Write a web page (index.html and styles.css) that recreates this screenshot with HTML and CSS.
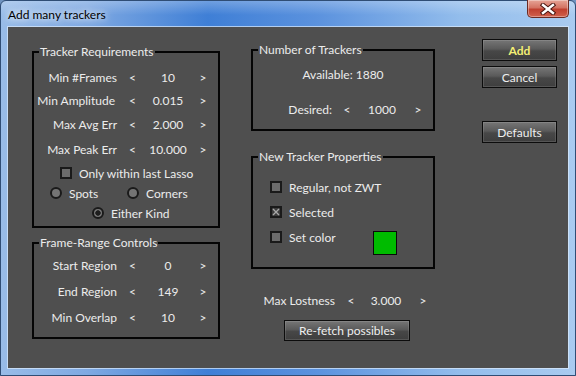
FILE: index.html
```html
<!DOCTYPE html>
<html lang="en">
<head>
  <meta charset="UTF-8" />
  <title>Add many trackers</title>
  <link rel="stylesheet" href="styles.css">
</head>
<body>
  <div class="window">
    <div class="titlebar">
      <span class="title">Add many trackers</span>
      <span class="close">
        <svg width="16" height="12" viewBox="0 0 16 12">
          <path d="M3 2 L13 10 M13 2 L3 10" stroke="#4a1510" stroke-width="4.4" stroke-linecap="square"/>
          <path d="M3 2 L13 10 M13 2 L3 10" stroke="#fff" stroke-width="2.4" stroke-linecap="square"/>
        </svg>
      </span>
    </div>

    <div class="client">
      <div class="col col-left">
        <fieldset class="group req">
          <legend>Tracker Requirements</legend>
          <div class="spin-grid req-grid">
            <span class="lbl">Min #Frames</span><span class="arr">&lt;</span><span class="val">10</span><span class="arr">&gt;</span>
            <span class="lbl amp">Min Amplitude</span><span class="arr">&lt;</span><span class="val">0.015</span><span class="arr">&gt;</span>
            <span class="lbl">Max Avg Err</span><span class="arr">&lt;</span><span class="val">2.000</span><span class="arr">&gt;</span>
            <span class="lbl">Max Peak Err</span><span class="arr">&lt;</span><span class="val">10.000</span><span class="arr">&gt;</span>
          </div>
          <div class="check lasso"><span class="box"></span>Only within last Lasso</div>
          <div class="radio-row">
            <span class="radio spots"><span class="dot"></span>Spots</span>
            <span class="radio"><span class="dot"></span>Corners</span>
          </div>
          <div class="radio-row either">
            <span class="radio"><span class="dot on"></span>Either Kind</span>
          </div>
        </fieldset>

        <fieldset class="group range">
          <legend>Frame-Range Controls</legend>
          <div class="spin-grid range-grid">
            <span class="lbl">Start Region</span><span class="arr">&lt;</span><span class="val">0</span><span class="arr">&gt;</span>
            <span class="lbl">End Region</span><span class="arr">&lt;</span><span class="val">149</span><span class="arr">&gt;</span>
            <span class="lbl">Min Overlap</span><span class="arr">&lt;</span><span class="val">10</span><span class="arr">&gt;</span>
          </div>
        </fieldset>
      </div>

      <div class="col col-mid">
        <fieldset class="group count">
          <legend>Number of Trackers</legend>
          <div class="available">Available: 1880</div>
          <div class="spin-grid desired-grid">
            <span class="lbl">Desired:</span><span class="arr">&lt;</span><span class="val">1000</span><span class="arr">&gt;</span>
          </div>
        </fieldset>

        <fieldset class="group props">
          <legend>New Tracker Properties</legend>
          <div class="prop-list">
            <div class="check prop"><span class="box"></span>Regular, not ZWT</div>
            <div class="check prop">
              <span class="box on">
                <svg width="8" height="8" viewBox="0 0 8 8"><path d="M1 1 L7 7 M7 1 L1 7" stroke="#a8a8a8" stroke-width="1.4"/></svg>
              </span>Selected
            </div>
            <div class="color-row">
              <div class="check prop setcolor"><span class="box"></span>Set color</div>
              <span class="swatch"></span>
            </div>
          </div>
        </fieldset>

        <div class="spin-grid lost-grid">
          <span class="lbl">Max Lostness</span><span class="arr">&lt;</span><span class="val">3.000</span><span class="arr">&gt;</span>
        </div>
        <button class="btn refetch">Re-fetch possibles</button>
      </div>

      <div class="col col-right">
        <button class="btn add">Add</button>
        <button class="btn">Cancel</button>
        <button class="btn defaults">Defaults</button>
      </div>
    </div>
  </div>
</body>
</html>
```

FILE: styles.css
```css
* { margin: 0; padding: 0; box-sizing: border-box; }

body {
  width: 576px;
  height: 376px;
  overflow: hidden;
  font-family: Lato, "Noto Sans", sans-serif;
  font-size: 12px;
  background: #6f93c0;
}

.window {
  width: 576px;
  height: 376px;
  display: flex;
  flex-direction: column;
  border: 1px solid #2f4d75;
  border-radius: 6px 6px 0 0;
  background:
    linear-gradient(rgba(255,255,255,0.25), rgba(255,255,255,0) 14px),
    linear-gradient(90deg, #98bce8 0%, #7fa9e2 15%, #3f7fd6 36%, #5b92de 55%, #93bdec 80%, #a9cbf0 100%);
}

.titlebar {
  height: 26px;
  display: flex;
  align-items: flex-start;
}

.title {
  padding: 6px 0 0 7px;
  line-height: 15px;
  color: #000;
  text-shadow: 0 0 6px #fff, 0 0 10px rgba(255,255,255,0.8);
}

.close {
  margin: -1px 6px 0 auto;
  width: 42px;
  height: 18px;
  display: flex;
  justify-content: center;
  align-items: center;
  border: 1px solid #6b2a22;
  border-top: none;
  border-radius: 0 0 5px 5px;
  background: linear-gradient(#e6a496, #d47363 45%, #c0402f 55%, #d0604c);
  box-shadow: inset 0 0 0 1px rgba(255,255,255,0.35);
}

.client {
  width: 560px;
  height: 341px;
  margin-left: 7px;
  display: flex;
  align-items: flex-start;
  padding: 12px 0 0 24px;
  background: #4f4f4f;
  color: #ececec;
  box-shadow: 0 0 0 1px rgba(220,235,252,0.7);
}

.col { display: flex; flex-direction: column; }

.col-left { width: 188px; margin-top: 5px; }
.col-mid { width: 184px; margin: 3px 0 0 31px; }
.col-right { width: 75px; margin-left: 47px; }

.group {
  border: 2px solid #050505;
  min-width: 0;
}

.group legend {
  margin-left: 5px;
  padding: 0 1px;
  line-height: 16px;
}

.spin-grid {
  display: grid;
  align-items: center;
}

.spin-grid .lbl { text-align: right; padding-right: 3px; white-space: nowrap; }
.spin-grid .arr, .spin-grid .val { text-align: center; }

.req-grid, .range-grid {
  grid-template-columns: 86px 25px 46px 24px;
}

.req-grid {
  margin-top: 6px;
  grid-template-rows: 22px 24px 25px 24px;
}

.req-grid .amp { padding-right: 5px; }

.range-grid {
  margin-top: 1px;
  grid-auto-rows: 26px;
}

.range { margin-top: 7px; padding-bottom: 7px; }

.check {
  display: flex;
  align-items: center;
}

.box {
  width: 12px;
  height: 12px;
  margin-right: 7px;
  border: 2px solid #1a1a1a;
  background: #6c6c6c;
  display: flex;
  justify-content: center;
  align-items: center;
}

.box.on { background: #3c3c3c; }

.lasso {
  height: 20px;
  margin-top: 2px;
  padding-left: 26px;
}

.radio-row {
  height: 20px;
  display: flex;
  align-items: center;
  padding-left: 16px;
}

.radio { display: flex; align-items: center; }
.radio.spots { width: 77px; }

.dot {
  width: 12px;
  height: 12px;
  margin-right: 7px;
  border: 2px solid #1a1a1a;
  border-radius: 50%;
  background: #747474;
}

.dot.on {
  background: radial-gradient(circle, #1e1e1e 0 2.4px, #777 3px);
}

.either { padding-left: 58px; }

.req { padding-bottom: 3px; }

.available {
  margin-top: 8px;
  height: 18px;
  line-height: 18px;
  text-align: center;
}

.desired-grid {
  margin-top: 14px;
  height: 22px;
  grid-template-columns: 83px 22px 48px 24px;
}

.desired-grid .lbl { padding-right: 4px; }

.count { padding-bottom: 9px; }

.props {
  margin-top: 18px;
  padding-bottom: 18px;
}

.prop-list {
  display: flex;
  flex-direction: column;
  gap: 1px;
  padding: 10px 0 0 17px;
}

.prop { height: 24px; }

.color-row { display: flex; align-items: flex-start; height: 24px; }
.setcolor { width: 103px; }

.swatch {
  width: 24px;
  height: 24px;
  margin-top: 6px;
  background: #00bb00;
  border: 1px solid #0a0a0a;
}

.lost-grid {
  margin-top: 20px;
  height: 22px;
  grid-template-columns: 88px 24px 46px 28px;
}

.lost-grid .lbl { padding-right: 4px; }

.btn {
  width: 75px;
  height: 22px;
  font: inherit;
  color: #efefef;
  border: 1px solid #0c0c0c;
  background: linear-gradient(#767676, #5a5a5a 45%, #474747 55%, #3e3e3e);
  box-shadow: inset 0 0 0 1px rgba(255,255,255,0.12);
  cursor: pointer;
}

.col-right .btn + .btn { margin-top: 5px; }
.col-right .btn.defaults { margin-top: 33px; }

.add { color: #f4ef74; font-weight: bold; }

.refetch {
  width: 126px;
  height: 21px;
  margin: 9px 0 0 33px;
}
```
